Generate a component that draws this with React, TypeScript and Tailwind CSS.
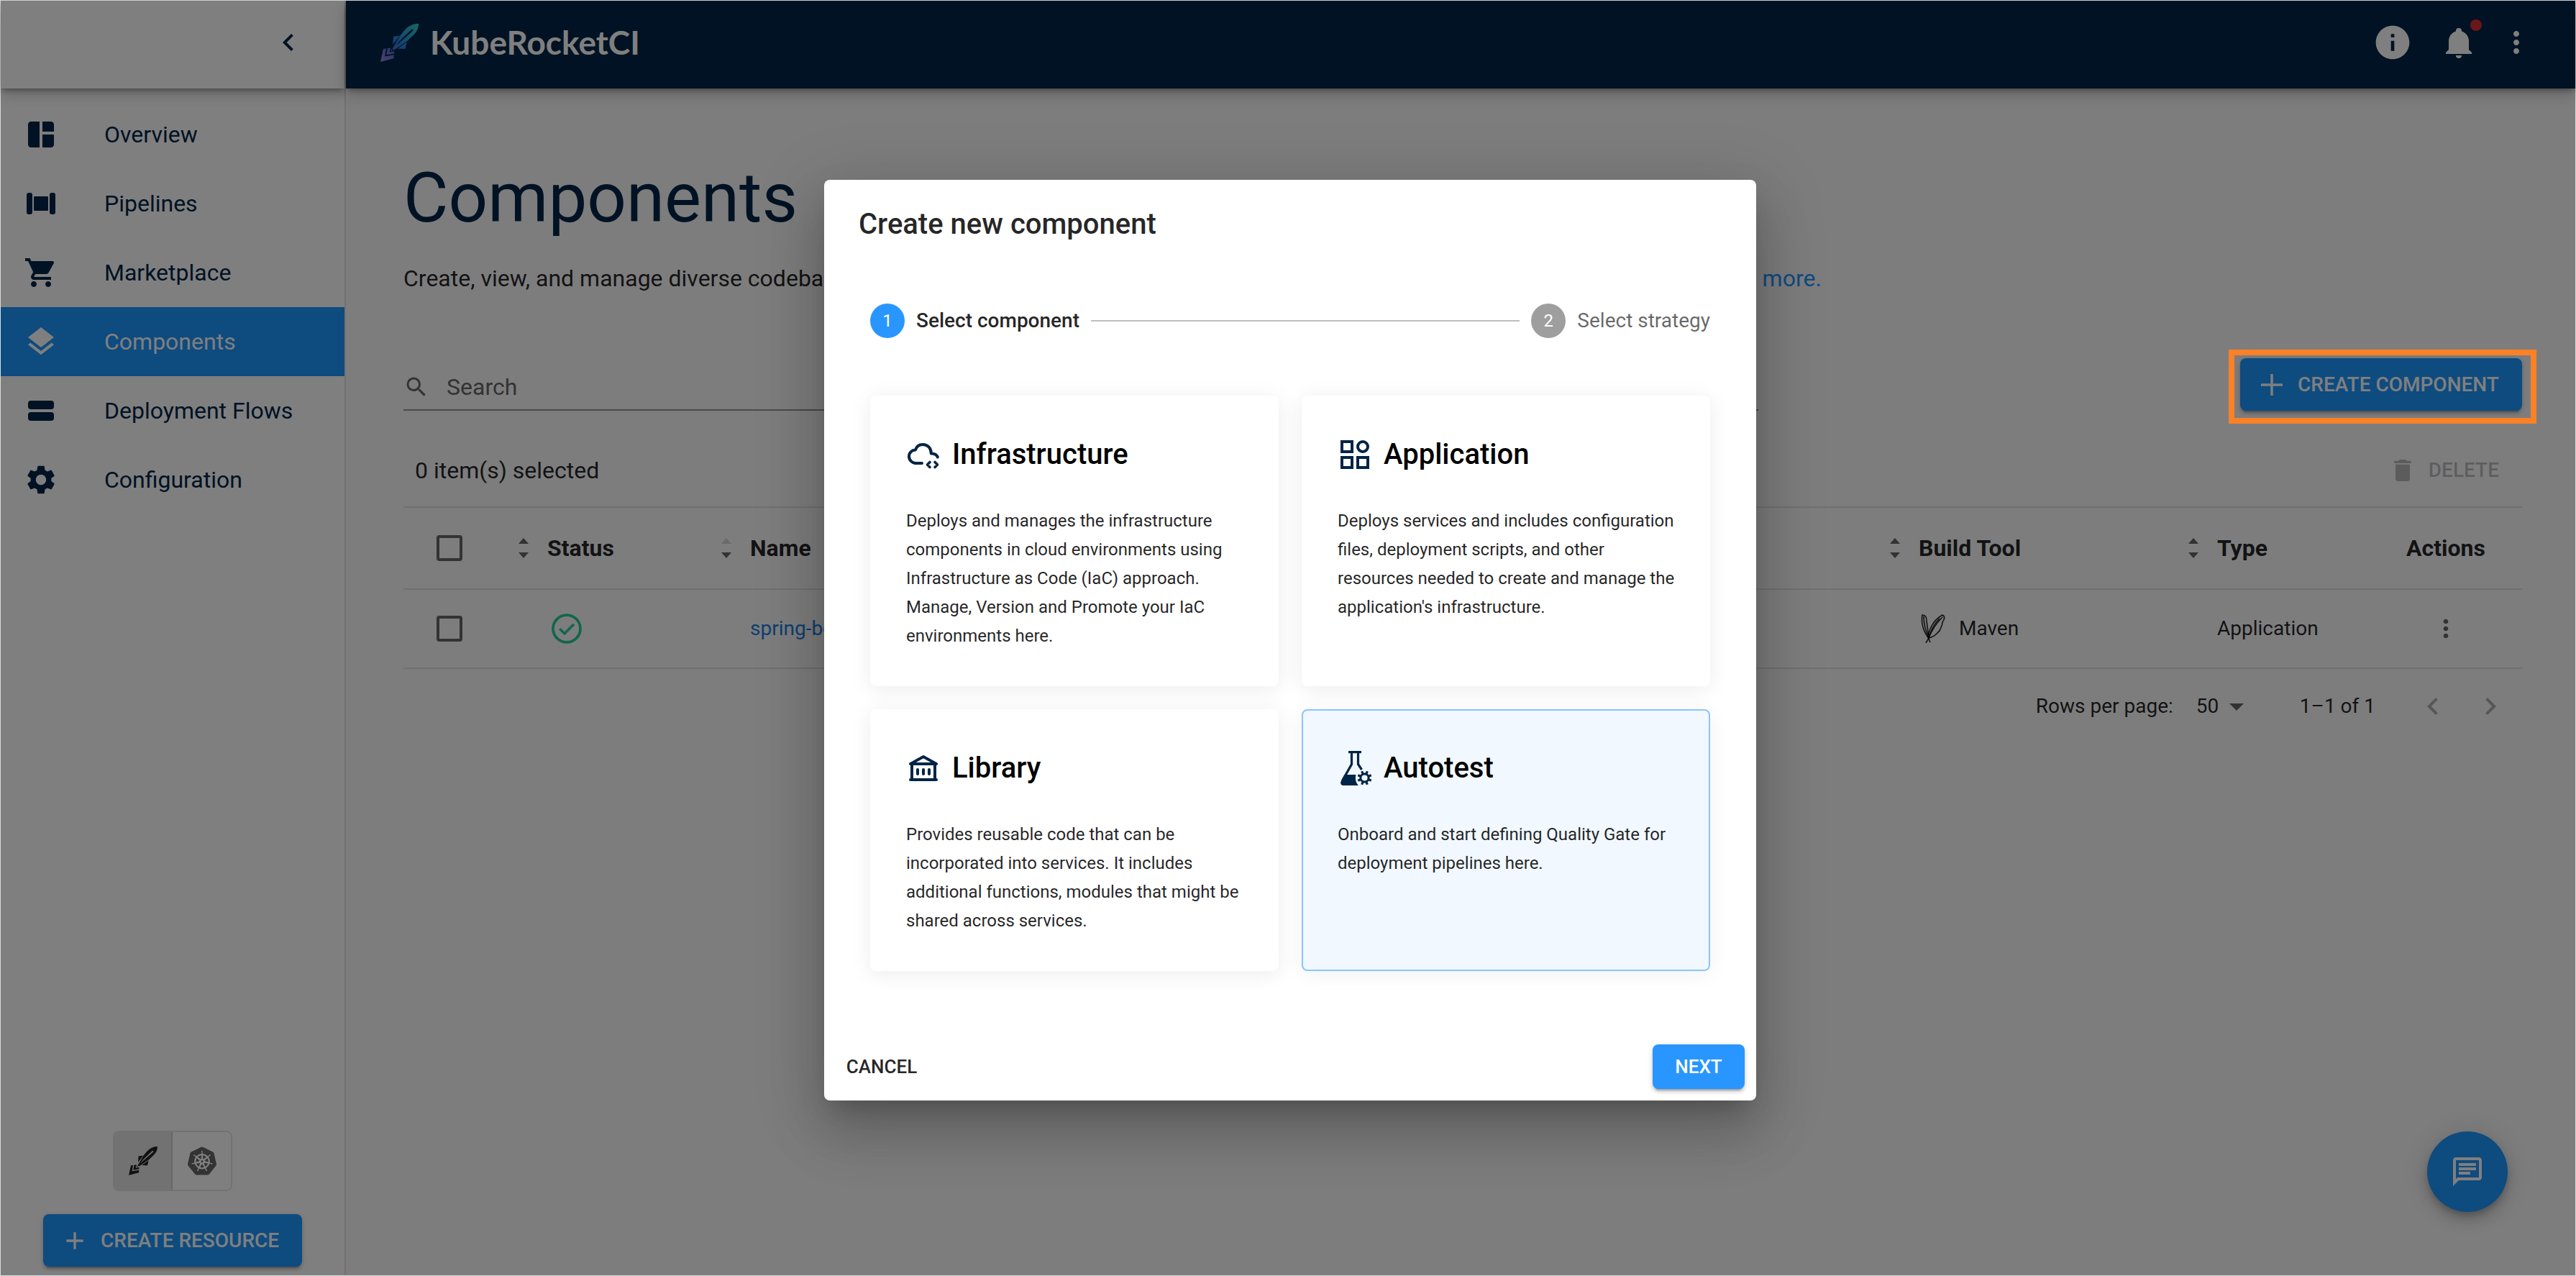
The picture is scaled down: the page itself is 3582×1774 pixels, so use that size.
import React from "react";
import {
  MdAdd,
  MdArrowDropDown,
  MdChevronLeft,
  MdChevronRight,
  MdDelete,
  MdInfo,
  MdLayers,
  MdMoreVert,
  MdOutlineChat,
  MdSearch,
  MdSettings,
  MdShoppingCart,
  MdSpaceDashboard,
} from "react-icons/md";
import { SiKubernetes } from "react-icons/si";

function PipelinesIcon({ className }: { className?: string }) {
  return (
    <svg viewBox="0 0 48 48" className={className} fill="currentColor" aria-hidden="true">
      <rect x="4" y="9" width="8" height="30" rx="3" />
      <rect x="36" y="9" width="8" height="30" rx="3" />
      <rect x="14" y="14" width="20" height="20" rx="1" />
    </svg>
  );
}

function FlowsIcon({ className }: { className?: string }) {
  return (
    <svg viewBox="0 0 48 48" className={className} fill="currentColor" aria-hidden="true">
      <rect x="6" y="10" width="36" height="12" rx="4" />
      <rect x="6" y="26" width="36" height="12" rx="4" />
    </svg>
  );
}

function BellIcon({ className }: { className?: string }) {
  return (
    <svg viewBox="0 0 24 24" className={className} fill="currentColor" aria-hidden="true">
      <path d="M21 19v1H3v-1l2-2v-6c0-3.1 2.03-5.83 5-6.71V4a2 2 0 0 1 4 0v.29c2.97.88 5 3.61 5 6.71v6l2 2m-7 2a2 2 0 0 1-4 0" />
    </svg>
  );
}

function RocketIcon({ className, gradient }: { className?: string; gradient?: boolean }) {
  const fill = gradient ? "url(#rocket-fill)" : "currentColor";
  return (
    <svg viewBox="0 0 120 120" className={className} aria-hidden="true">
      <defs>
        <linearGradient id="rocket-fill" gradientUnits="userSpaceOnUse" x1="120" y1="0" x2="0" y2="120">
          <stop offset="0" stopColor="#2fd0c8" />
          <stop offset="0.5" stopColor="#2b84e0" />
          <stop offset="0.72" stopColor="#5a6fd0" />
          <stop offset="1" stopColor="#9d86d8" />
        </linearGradient>
      </defs>
      <g fill={fill}>
        <path
          fillRule="evenodd"
          d="M120 0C104 0 90 6 79 17L62 37L37 80L44 82L85 54L103 37C114 26 120 15 120 0ZM99 17L104 21L62 58L48 71L60 55Z"
        />
        <path d="M41 40L60 38L39 66Z" />
        <path d="M83 58L78 79L54 78Z" />
        <path d="M9 79L18 78L14 103L43 98L42 109L0 120Z" />
        <path d="M22 77L32 76L29 89L44 87L43 94L19 98Z" />
        <path d="M35 78L37 84L44 84L33 86Z" />
      </g>
    </svg>
  );
}

function CheckIcon({ className }: { className?: string }) {
  return (
    <svg viewBox="0 0 24 24" className={className} fill="none" stroke="currentColor" role="img" aria-label="Created">
      <circle cx="12" cy="12" r="9.1" strokeWidth="1.8" />
      <path d="M7.3 12.1l3.3 3.1 6.2-6.2" strokeWidth="1.7" />
    </svg>
  );
}

function MavenIcon({ className }: { className?: string }) {
  return (
    <svg viewBox="0 0 40 40" className={className} fill="none" stroke="currentColor" strokeWidth="1.6" aria-hidden="true">
      <path d="M14 33C7 25 3 13 5 1C9 1 11 4 11 9C12 16 13 24 14 33Z" />
      <path d="M7 3C7 13 9 22 14 32" />
      <path d="M14 33C13 23 20 8 33 1C37 3 36 7 33 11C33 17 30 19 29 23C25 26 24 31 14 33Z" />
      <path d="M33 4C25 12 18 22 14 33L10 40" />
      <path d="M12 30L16 39" />
      <path d="M29 6C22 13 18 20 16 28" />
    </svg>
  );
}

function CloudCodeIcon() {
  return (
    <svg viewBox="0 0 48 48" className="size-12 shrink-0" fill="none" stroke="currentColor" strokeWidth="4" strokeLinecap="round" strokeLinejoin="round" aria-hidden="true">
      <path d="M22 36H14C8 36 4 31.500 4 26.500C4 21.500 8 17.500 13 17.500C14.500 12.500 18 10 23 10C30 10 34.800 15 34.800 22.500C39 22.500 42.500 24 43.800 27.500" />
      <path d="M33 34.500L29.500 38L33 41.500M40 34.500L43.500 38L40 41.500" strokeWidth="3.600" />
    </svg>
  );
}

function AppsIcon() {
  return (
    <svg viewBox="0 0 48 48" className="size-12 shrink-0" fill="none" stroke="currentColor" strokeWidth="4" aria-hidden="true">
      <rect x="6" y="6" width="14" height="14" />
      <circle cx="35" cy="13" r="7" />
      <rect x="6" y="28" width="14" height="14" />
      <rect x="28" y="28" width="14" height="14" />
    </svg>
  );
}

function LibraryIcon() {
  return (
    <svg viewBox="0 0 48 48" className="size-12 shrink-0" fill="none" stroke="currentColor" strokeWidth="4" strokeLinecap="round" strokeLinejoin="round" aria-hidden="true">
      <path d="M24 8L42 18H6Z" />
      <path d="M8 19V40M40 19V40M6 40H42" />
      <path d="M16 26V32M24 26V32M32 26V32" />
    </svg>
  );
}

function FlaskGearIcon() {
  const teeth = [0, 45, 90, 135, 180, 225, 270, 315];
  return (
    <svg viewBox="0 0 48 48" className="size-12 shrink-0" stroke="currentColor" fill="none" aria-hidden="true">
      <path d="M15 1.600H33" strokeWidth="3.200" />
      <path d="M19.500 2V18.500L6.500 41.500" strokeWidth="3.200" />
      <path d="M28.500 2V18.500L33.500 26" strokeWidth="3.200" />
      <path fill="currentColor" stroke="none" d="M9.500 33H25.500C24 38.500 25.200 44 29 48H8C5 48 3.200 45 4.700 42.200Z" />
      <g transform="translate(37.500 37.500)">
        <circle r="5.600" strokeWidth="3" />
        {teeth.map((a) => (
          <path key={a} d="M0 -6V-10" strokeWidth="3.200" transform={`rotate(${a + 22.5})`} />
        ))}
      </g>
    </svg>
  );
}

const navItems = [
  { label: "Overview", icon: MdSpaceDashboard },
  { label: "Pipelines", icon: PipelinesIcon },
  { label: "Marketplace", icon: MdShoppingCart },
  { label: "Components", icon: MdLayers, active: true },
  { label: "Deployment Flows", icon: FlowsIcon },
  { label: "Configuration", icon: MdSettings },
];

const kinds = [
  {
    title: "Infrastructure",
    icon: <CloudCodeIcon />,
    text: "Deploys and manages the infrastructure components in cloud environments using Infrastructure as Code (IaC) approach. Manage, Version and Promote your IaC environments here.",
  },
  {
    title: "Application",
    icon: <AppsIcon />,
    text: "Deploys services and includes configuration files, deployment scripts, and other resources needed to create and manage the application's infrastructure.",
  },
  {
    title: "Library",
    icon: <LibraryIcon />,
    text: "Provides reusable code that can be incorporated into services. It includes additional functions, modules that might be shared across services.",
  },
  {
    title: "Autotest",
    icon: <FlaskGearIcon />,
    text: "Onboard and start defining Quality Gate for deployment pipelines here.",
    active: true,
  },
];

const raised =
  "shadow-[0_6px_2px_-4px_rgba(0,0,0,0.2),0_4px_4px_rgba(0,0,0,0.14),0_2px_10px_rgba(0,0,0,0.12)]";

function Sidebar() {
  return (
    <aside className="flex w-[480px] shrink-0 flex-col border-r-2 border-black/10 bg-white text-[#002446]">
      <div className="flex h-[122px] items-center justify-end pr-[54px] pb-1.5 shadow-[0_4px_8px_-2px_rgba(0,0,0,0.35),0_8px_20px_rgba(0,0,0,0.2)]">
        <button type="button" aria-label="Collapse sidebar">
          <MdChevronLeft className="size-12" />
        </button>
      </div>
      <nav className="flex flex-col pt-4">
        {navItems.map(({ label, icon: Icon, active }) => (
          <a
            key={label}
            href="#"
            className={
              active
                ? "flex h-24 items-center gap-16 bg-[#1d97ff] pl-8 text-[32px] text-white"
                : "flex h-24 items-center gap-16 pl-8 text-[32px]"
            }
          >
            <Icon className="size-12 shrink-0" />
            {label}
          </a>
        ))}
      </nav>
      <div className="mt-auto flex flex-col items-center gap-8 pb-3">
        <div className="flex h-[84px] w-[166px] overflow-hidden rounded-lg border-2 border-black/10">
          <button type="button" aria-label="KubeRocketCI view" className="flex w-1/2 items-center justify-center border-r-2 border-black/10 bg-black/10 text-[#222]">
            <RocketIcon className="size-10" />
          </button>
          <button type="button" aria-label="Kubernetes view" className="flex w-1/2 items-center justify-center text-[#666]">
            <SiKubernetes className="size-10" />
          </button>
        </div>
        <button type="button" className={`flex h-[73px] w-[360px] items-center gap-4 rounded-lg bg-[#1d97ff] pl-6 text-[28px] font-medium text-white ${raised}`}>
          <MdAdd className="size-10" />
          CREATE RESOURCE
        </button>
      </div>
    </aside>
  );
}

function Header() {
  return (
    <header className="relative flex h-[122px] items-center justify-between bg-[#002446] pr-[58px] pb-1.5 pl-12 text-white shadow-[0_4px_8px_-2px_rgba(0,0,0,0.35),0_8px_20px_rgba(0,0,0,0.2)]">
      <a href="#" className="flex items-center gap-4">
        <RocketIcon gradient className="size-[53px]" />
        <span className="font-['Lato'] text-[46px] leading-[60px] font-bold">KubeRocketCI</span>
      </a>
      <div className="flex items-center gap-8">
        <button type="button" aria-label="About" className="mr-2">
          <MdInfo className="size-14" />
        </button>
        <button type="button" aria-label="Notifications" className="relative">
          <BellIcon className="size-12" />
          <span className="absolute -top-2 -right-2 size-4 rounded-full bg-[#d32f2f]" />
        </button>
        <button type="button" aria-label="More">
          <MdMoreVert className="size-12" />
        </button>
      </div>
    </header>
  );
}

function SortHeader({ label, ascending }: { label: string; ascending?: boolean }) {
  return (
    <button type="button" className="flex items-center gap-[26px] font-bold">
      <svg viewBox="0 0 14 28" className="h-7 w-3.5" fill="#666" aria-hidden="true">
        <path d="M0 8L7 0L14 8Z" fill={ascending ? "#d4d4d6" : "#666"} />
        <path d="M0 20H14L7 28Z" />
      </svg>
      {label}
    </button>
  );
}

const tick = "block size-9 appearance-none rounded border-4 border-[#666]";

function Main() {
  return (
    <main className="flex-1 bg-[#fafafc] pt-24 pr-[74px] pb-12 pl-20 text-black/87">
      <h1 className="text-[96px] leading-[112px] text-[#002446]">Components</h1>
      <p className="mt-8 text-[32px] leading-[48px]">
        Create, view, and manage diverse codebases, encompassing applications, libraries, autotests, and
        infrastructure environments.{" "}
        <a href="#" className="text-[#1d97ff]">
          Learn more.
        </a>
      </p>
      <div className="mt-[87px] flex items-end justify-between">
        <label className="flex h-[73px] w-[1884px] items-center gap-6 border-b-2 border-[#949496] pt-2">
          <MdSearch className="size-9 shrink-0 text-[#666]" />
          <input
            type="search"
            placeholder="Search"
            aria-label="Search components"
            className="w-full bg-transparent text-[32px] outline-none placeholder:text-[#666]"
          />
        </label>
        <div className="relative">
          <button type="button" className={`flex h-[73px] w-[392px] items-center gap-4 rounded-lg bg-[#1d97ff] pl-6 text-[28px] font-medium text-white ${raised}`}>
            <svg viewBox="0 0 40 40" className="size-10" stroke="currentColor" strokeWidth="3.500" aria-hidden="true">
              <path d="M20 5V35M5 20H35" />
            </svg>
            CREATE COMPONENT
          </button>
          <span className="pointer-events-none absolute -top-3 -right-5 -bottom-[18px] -left-4 z-30 border-8 border-[#fa8126]" />
        </div>
      </div>
      <div className="mt-[45px] flex h-[76px] items-center justify-between px-4 text-[32px]">
        <span>0 item(s) selected</span>
        <button type="button" disabled className="flex items-center gap-4 pr-4 text-[28px] font-medium text-black/26">
          <MdDelete className="size-10" />
          DELETE
        </button>
      </div>
      <table className="mt-3 w-full table-fixed border-t-2 border-black/10 text-left">
        <colgroup>
          <col className="w-32" />
          <col className="w-[282px]" />
          <col />
          <col className="w-[415px]" />
          <col className="w-[284px]" />
          <col className="w-[212px]" />
        </colgroup>
        <thead className="text-[32px]">
          <tr className="h-[114px] border-b-2 border-black/10">
            <th className="pl-[46px]">
              <input type="checkbox" aria-label="Select all components" className={tick} />
            </th>
            <th className="pl-8"><SortHeader label="Status" /></th>
            <th className="pl-8"><SortHeader label="Name" ascending /></th>
            <th className="pl-8"><SortHeader label="Build Tool" /></th>
            <th className="pl-8"><SortHeader label="Type" /></th>
            <th className="text-center font-bold">Actions</th>
          </tr>
        </thead>
        <tbody className="text-[28px]">
          <tr className="h-[110px] border-b-2 border-black/10">
            <td className="pl-[46px]">
              <input type="checkbox" aria-label="Select spring-boot" className={tick} />
            </td>
            <td className="pl-[74px]">
              <CheckIcon className="size-[50px] text-[#24cd98]" />
            </td>
            <td className="pl-[72px]">
              <a href="#" className="text-[#1d7fe0]">spring-boot</a>
            </td>
            <td className="pl-[72px]">
              <span className="flex items-center gap-4">
                <MavenIcon className="size-10" />
                Maven
              </span>
            </td>
            <td className="pl-[72px]">Application</td>
            <td>
              <button type="button" aria-label="Row actions" className="mx-auto block text-black/60">
                <MdMoreVert className="size-10" />
              </button>
            </td>
          </tr>
        </tbody>
      </table>
      <div className="flex h-[104px] items-center justify-end pr-5 text-[28px]">
        <label htmlFor="rows">Rows per page:</label>
        <span className="relative ml-8 flex items-center">
          <select id="rows" defaultValue="50" className="w-20 appearance-none bg-transparent">
            <option>50</option>
          </select>
          <MdArrowDropDown className="pointer-events-none absolute right-0 size-12 text-black/60" />
        </span>
        <span className="ml-16">1–1 of 1</span>
        <button type="button" aria-label="Previous page" disabled className="ml-14 text-black/30">
          <MdChevronLeft className="size-12" />
        </button>
        <button type="button" aria-label="Next page" disabled className="ml-8 text-black/30">
          <MdChevronRight className="size-12" />
        </button>
      </div>
    </main>
  );
}

function CreateDialog() {
  return (
    <div className="absolute inset-0 z-20 flex items-center justify-center bg-black/50 pt-1.5 pl-1.5">
      <section
        role="dialog"
        aria-labelledby="dialog-title"
        className="w-[1296px] max-w-full rounded-lg bg-white px-16 pt-8 pb-4 text-black/87 shadow-[0_22px_30px_-14px_rgba(0,0,0,0.2),0_48px_76px_6px_rgba(0,0,0,0.14),0_18px_92px_16px_rgba(0,0,0,0.12)]"
      >
        <h2 id="dialog-title" className="-ml-4 text-[40px] leading-[60px] font-medium">
          Create new component
        </h2>
        <ol className="mt-20 flex items-center gap-4 text-[28px]">
          <li className="flex items-center gap-4 font-medium">
            <span className="flex size-12 items-center justify-center rounded-full bg-[#2996ff] text-2xl font-normal text-white">1</span>
            Select component
          </li>
          <li aria-hidden="true" className="h-0.5 flex-1 bg-[#bdbdbd]" />
          <li className="flex items-center gap-4 text-black/60">
            <span className="flex size-12 items-center justify-center rounded-full bg-[#9e9e9e] text-2xl text-white">2</span>
            Select strategy
          </li>
        </ol>
        <div className="mt-20 grid grid-cols-2 gap-8">
          {kinds.map((k) => (
            <button
              key={k.title}
              type="button"
              className={
                k.active
                  ? "flex flex-col justify-start rounded-lg border-2 border-[#8ac4ff] bg-[#f1f8ff] py-12 pr-11 pl-12 text-left shadow-[0_4px_30px_rgba(0,0,50,0.06)]"
                  : "flex flex-col justify-start rounded-lg border-2 border-white bg-white py-12 pr-11 pl-12 text-left shadow-[0_4px_30px_rgba(0,0,50,0.08)]"
              }
            >
              <span className="flex h-16 items-center gap-4 text-[#002446]">
                {k.icon}
                <span className="text-[40px] font-medium text-black">{k.title}</span>
              </span>
              <span className="mt-10 text-2xl leading-[40px]">{k.text}</span>
            </button>
          ))}
        </div>
        <div className="-mx-12 mt-[102px] flex h-[62px] justify-between text-[26px] font-medium">
          <button type="button" className="w-32">CANCEL</button>
          <button type="button" className={`w-32 rounded-lg bg-[#2996ff] text-white ${raised}`}>NEXT</button>
        </div>
      </section>
    </div>
  );
}

export default function App() {
  return (
    <div className="relative flex min-h-screen border border-[#d9dcdc] font-['Roboto',sans-serif]">
      <Sidebar />
      <div className="flex min-w-0 flex-1 flex-col">
        <Header />
        <Main />
      </div>
      <button type="button" aria-label="Open chat" className="absolute right-[94px] bottom-[88px] flex size-28 items-center justify-center rounded-full bg-[#1d97ff] text-white shadow-[0_6px_10px_-2px_rgba(0,0,0,0.2),0_12px_20px_rgba(0,0,0,0.14),0_2px_36px_rgba(0,0,0,0.12)]">
        <MdOutlineChat className="size-12" />
      </button>
      <CreateDialog />
    </div>
  );
}
